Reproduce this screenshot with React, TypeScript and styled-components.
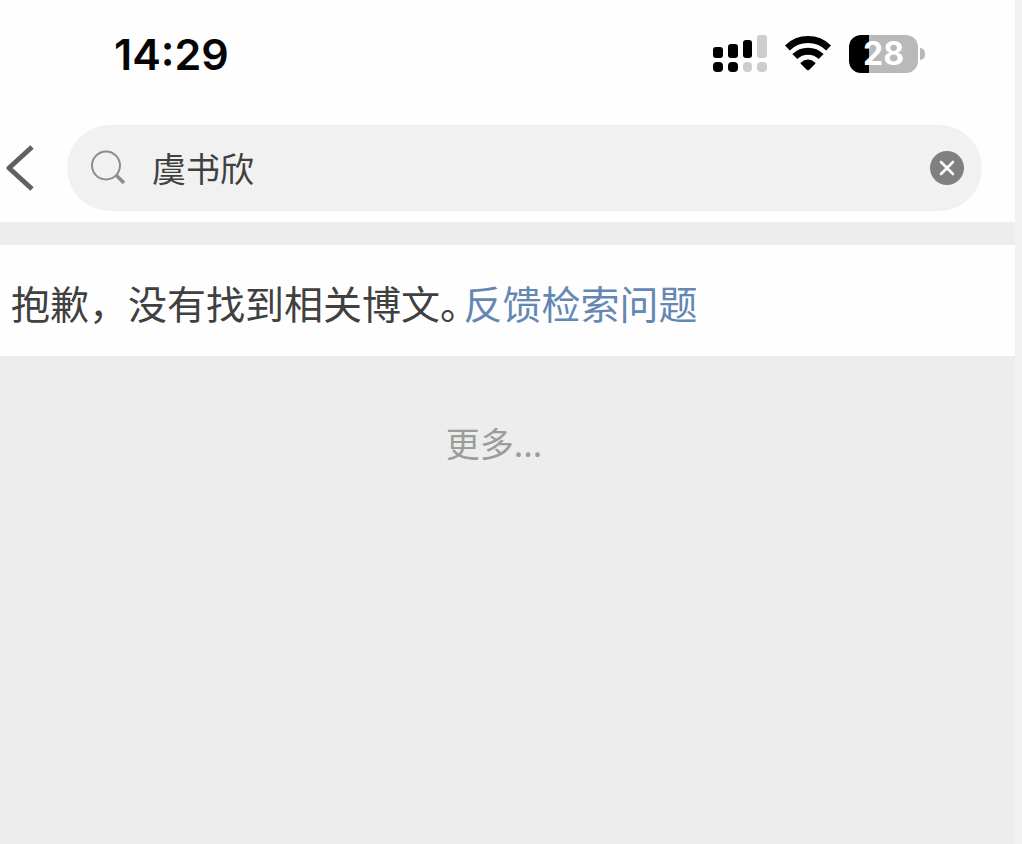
import React, { useState } from "react";
import styled, { createGlobalStyle } from "styled-components";

const GlobalStyle = createGlobalStyle`
  *, *::before, *::after { box-sizing: border-box; }
  body {
    margin: 0;
    background: #f1f1f3;
    font-family: Inter, "Noto Sans CJK SC", sans-serif;
  }
  button, input { font: inherit; border: 0; padding: 0; background: none; }
`;

const Screen = styled.div`
  display: flex;
  flex-direction: column;
  min-height: 100vh;
  margin-right: 7px;
  background: #ededed;
`;

const Header = styled.header`
  background: #fefefe;
  padding-bottom: 11px;
`;

const StatusBar = styled.div`
  display: flex;
  align-items: center;
  justify-content: space-between;
  height: 108px;
  padding: 0 90px 0 114px;
`;

const Clock = styled.time`
  font-size: 43px;
  line-height: 52px;
  font-weight: 600;
  color: #050505;
`;

const Indicators = styled.div`
  display: flex;
  align-items: center;
  gap: 18px;
  svg { display: block; }
`;

const Battery = styled.div`
  display: flex;
  align-items: center;
  gap: 2px;
`;

const BatteryBody = styled.div`
  display: flex;
  align-items: center;
  justify-content: center;
  width: 69px;
  height: 38px;
  border-radius: 12px;
  background: linear-gradient(to right, #000 20px, #b9b9b9 20px);
  color: #fff;
  font-size: 32px;
  line-height: 38px;
  font-weight: 700;
`;

const BatteryTip = styled.div`
  width: 5px;
  height: 12px;
  border-radius: 0 6px 6px 0;
  background: #b9b9b9;
`;

const SearchRow = styled.form`
  display: flex;
  align-items: center;
  padding: 17px 33px 0 0;
`;

const BackButton = styled.button`
  flex: none;
  width: 67px;
  padding-left: 6px;
  svg { display: block; }
`;

const SearchBox = styled.label`
  display: flex;
  align-items: center;
  flex: 1;
  min-width: 0;
  height: 86px;
  padding: 0 18px 0 24px;
  border-radius: 43px;
  background: #f1f1f1;
  svg { display: block; flex: none; }
`;

const SearchInput = styled.input`
  flex: 1;
  min-width: 0;
  margin-left: 25px;
  outline: none;
  font-family: "Noto Sans CJK SC", sans-serif;
  font-size: 34px;
  line-height: 50px;
  font-weight: 400;
  color: #404040;
`;

const ClearButton = styled.button`
  flex: none;
`;

const EmptyResult = styled.p`
  margin: 23px 0 0;
  padding: 29px 11px 26px;
  background: #fefefe;
  font-family: "Noto Sans CJK SC", sans-serif;
  font-size: 39px;
  line-height: 56px;
  font-weight: 400;
  color: #404040;
`;

const Stop = styled.span`
  font-feature-settings: "halt";
`;

const FeedbackLink = styled.a`
  margin-left: 4px;
  color: #6488b3;
  text-decoration: none;
`;

const MoreButton = styled.button`
  align-self: center;
  margin-top: 62px;
  margin-right: 27px;
  font-family: "Noto Sans CJK SC", sans-serif;
  font-size: 34px;
  line-height: 50px;
  font-weight: 400;
  color: #9c9c9c;
`;

const SignalIcon = () => (
  <svg width="54" height="38" viewBox="0 0 54 38" aria-label="信号">
    <g fill="#000">
      <rect x="0" y="12" width="10" height="11" rx="3" />
      <rect x="15" y="9" width="10" height="14" rx="3" />
      <rect x="30" y="5" width="9" height="18" rx="3" />
      <rect x="0" y="27" width="10" height="10" rx="4" />
      <rect x="15" y="27" width="10" height="10" rx="4" />
    </g>
    <g fill="#cdcdcd">
      <rect x="44" y="0" width="10" height="23" rx="3" />
      <rect x="30" y="27" width="9" height="10" rx="4" />
      <rect x="44" y="27" width="10" height="10" rx="4" />
    </g>
  </svg>
);

const WifiIcon = () => (
  <svg width="46" height="36" viewBox="0 0 46 36" aria-label="无线网络">
    <g fill="none" stroke="#000" strokeWidth="7">
      <path d="M2.4 12A29.5 29.5 0 0 1 43.6 12" />
      <path d="M9.8 20.6A18.8 18.8 0 0 1 36.2 20.6" />
    </g>
    <path d="M16 26.4a10.2 10.2 0 0 1 14 0c.6.6.6 1.1 0 1.7l-6 5.8q-1 .9-2 0l-6-5.8c-.6-.6-.6-1.1 0-1.7Z" fill="#000" />
  </svg>
);

const BackIcon = () => (
  <svg width="28" height="46" viewBox="0 0 28 46">
    <path d="M26 2 3 23l23 21" fill="none" stroke="#606060" strokeWidth="5" strokeLinejoin="round" />
  </svg>
);

const SearchIcon = () => (
  <svg width="36" height="36" viewBox="0 0 36 36">
    <circle cx="15" cy="15.5" r="14" fill="none" stroke="#8c8c8c" strokeWidth="2" />
    <path d="m25.5 25.5 7.5 7.5" fill="none" stroke="#8c8c8c" strokeWidth="3.6" />
  </svg>
);

const ClearIcon = () => (
  <svg width="34" height="34" viewBox="0 0 34 34">
    <circle cx="17" cy="17" r="17" fill="#808080" />
    <path d="m11 11 12 12m0-12L11 23" fill="none" stroke="#fff" strokeWidth="2.6" strokeLinecap="round" />
  </svg>
);

export default function App() {
  const [query, setQuery] = useState("虞书欣");

  return (
    <>
      <GlobalStyle />
      <Screen>
        <Header>
          <StatusBar>
            <Clock>14:29</Clock>
            <Indicators>
              <SignalIcon />
              <WifiIcon />
              <Battery>
                <BatteryBody>28</BatteryBody>
                <BatteryTip />
              </Battery>
            </Indicators>
          </StatusBar>
          <SearchRow onSubmit={(e) => e.preventDefault()}>
            <BackButton type="button" aria-label="返回">
              <BackIcon />
            </BackButton>
            <SearchBox>
              <SearchIcon />
              <SearchInput
                type="text"
                aria-label="搜索"
                value={query}
                onChange={(e) => setQuery(e.target.value)}
              />
              <ClearButton type="button" aria-label="清除" onClick={() => setQuery("")}>
                <ClearIcon />
              </ClearButton>
            </SearchBox>
          </SearchRow>
        </Header>
        <EmptyResult>
          抱歉，没有找到相关博文<Stop>。</Stop>
          <FeedbackLink href="#feedback">反馈检索问题</FeedbackLink>
        </EmptyResult>
        <MoreButton type="button">更多...</MoreButton>
      </Screen>
    </>
  );
}
